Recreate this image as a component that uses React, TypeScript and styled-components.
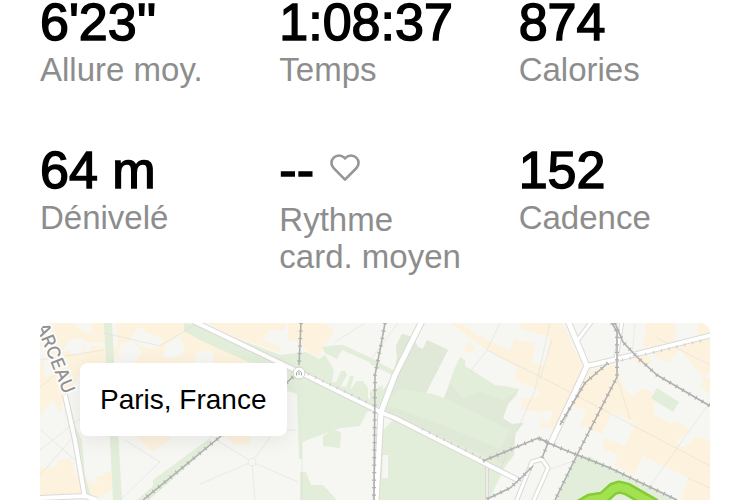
import React from "react";
import styled, { createGlobalStyle } from "styled-components";

const GlobalStyle = createGlobalStyle`
  * { box-sizing: border-box; }
  body { margin: 0; background: #fff; }
`;

const Page = styled.main`
  display: flex;
  flex-direction: column;
  gap: 48px;
  min-height: 100vh;
  padding: 0 40px;
  font-family: "Liberation Sans", Arial, sans-serif;
  color: #000;
`;

const Stats = styled.dl`
  display: grid;
  grid-template-columns: repeat(3, 1fr);
  gap: 60px 48px;
  margin: 0;
`;

const Stat = styled.div`
  display: flex;
  flex-direction: column-reverse;
  justify-content: flex-end;
  gap: 7px;
`;

const Value = styled.dd<{ $withIcon?: boolean }>`
  display: flex;
  align-items: flex-start;
  gap: 16px;
  min-height: ${(p) => (p.$withIcon ? 46 : 44)}px;
  margin: 0;
  font-size: 52px;
  line-height: 44px;
  font-kerning: none;
  white-space: nowrap;
  -webkit-text-stroke: 1.5px #000;
`;

const Label = styled.dt`
  font-size: 33px;
  line-height: 37px;
  color: #8d8d8d;
`;

const HeartIcon = styled.svg`
  width: 30px;
  height: 28px;
  margin-top: 6px;
  fill: none;
  stroke: #969696;
  stroke-width: 2.6;
  stroke-linejoin: round;
`;

const MapCard = styled.section`
  position: relative;
  flex: 1;
  min-height: 177px;
  overflow: hidden;
  border-radius: 10px 10px 0 0;
  background: #f6f7f2;
`;

const MapDrawing = styled.svg`
  position: absolute;
  inset: 0;
  width: 100%;
  height: 100%;
`;

const Place = styled.div`
  position: absolute;
  top: 40px;
  left: 40px;
  padding: 20px;
  border-radius: 8px;
  background: #fff;
  box-shadow: 0 4px 20px rgba(0, 0, 0, 0.07);
  font-size: 28px;
  line-height: 33px;
`;

const stats = [
  { value: "6'23''", label: "Allure moy." },
  { value: "1:08:37", label: "Temps" },
  { value: "874", label: "Calories" },
  { value: "64 m", label: "Dénivelé" },
  { value: "--", label: "Rythme card. moyen", heart: true },
  { value: "152", label: "Cadence" },
];

const blocks = [
  "M50 323H73L83 331 92 334V323H104L105 343 90 343 80 338 70 340 62 352 81 348 100 345 108 352V372L80 376 66 396 60 412 52 400 40 416V365L46 350 40 345V336L52 335Z",
  "M116 323H185L230 344 290 366H120L112 350 118 345Z",
  "M208 323H286L285 330 270 330 262 340 280 347 281 353 225 334Z",
  "M288 323H325L335 331 328 340 318 358 306 350 300 343 288 340Z",
  "M133 434H170V440L153 452ZM203 434H250V444L236 445 225 437Z",
  "M40 468L57 466V461L70 458 74 464V475L85 479 97 484V476H103L105 472H112V490L98 498 60 495 40 498Z",
  "M450 323H461L475 333 490 342 510 350 514 339 534 343 535 352 531 362 545 366 550 336 540 335 521 329 520 323H562L568 333 573 347 582 362 583 375 556 430 547 427 553 412 545 410 541 413V428H547L540 412 521 409 523 399 536 397 540 391 514 379 518 368 498 357 487 350 470 338Z",
  "M469 342L475 349 469 354 464 349Z",
  "M585 372L617 364 620 378 625 390 635 397 641 388 652 392 655 402 653 414 672 424 678 422 690 430 676 442 684 448 695 437 710 440V500H681L688 478 643 456 634 475 614 465 618 455 602 448 605 438 625 446 635 423 612 412 602 434 580 425 587 410 570 405Z",
  "M646 323H676L675 342 697 338 698 323H710V370L700 385 710 395V378L704 378 680 350 668 362 657 358 650 345 643 348Z",
  "M631 356H650L651 364 640 366Z",
];

const gaps = [
  "M137 328H142L145 332 162 338 159 349 143 347 130 339Z",
  "M166 344L180 336 185 351 175 358 163 358Z",
  "M70 348H82V354H71ZM84 344L90 346V352H84Z",
  "M43 352L52 355 55 371 45 377Z",
  "M195 353L212 350 214 363H196Z",
  "M120 345L132 340 142 352 134 363H118Z",
];

const parks = [
  "M104 323H112L122 500H113Z",
  "M184 323L200 325 225 334 280 355 306 352 319 359 325 355 334 370 332 382 336 382 341 371 345 371 347 375 341 386 346 387 350 376 354 376 350 390 357 381 363 381 368 388 368 398 380 408 367 412 360 426 340 428 302 442V459H299L297 394 285 390V370L255 365 200 340 184 331Z",
  "M322 347L335 345 343 345 380 362 378 366 342 350 337 359 325 353Z",
  "M323 436L333 430 341 432 340 448 323 446Z",
  "M300 472H306L311 485H323L337 500H300Z",
  "M396 346L402 334 413 337 418 347 423 349 427 340 448 350 426 393 433 394 444 398 454 370 460 357 465 360V366L478 374 495 385 505 386 519 389 516 396 508 404 503 418 512 424 524 423 515 433 514 455 505 467 489 500H376L383 430 392 421 383 412 380 395 391 378 397 358Z",
  "M370 358L395 371 394 376 370 364ZM370 392L383 385 381 410 370 408Z",
  "M577 455L590 457 677 500H555Z",
  "M657 388L679 402 673 412 651 398Z",
  "M68 397L76 428 82 440 85 475 92 500H85L74 442Z",
  "M137 500L153 486V480L210 438 213 443 149 500Z",
];

const woods = [
  "M396 346L402 334 413 337 418 347 423 349 427 340 448 350 426 393 433 394 400 389 391 398 397 358Z",
  "M444 398L451 383 463 399 480 391 503 401 519 389 508 404 503 418 512 424 524 423 515 433 514 455 504 464 390 414 384 407 395 408 440 424 500 449 510 430 480 415Z",
];

const paths = [
  "M40 387L58 373M40 450L104 400M41 430L75 460M120 500L160 462 125 440M104 333L160 346 198 323",
  "M40 360L104 350M75 435L40 475M252 462L255 500M252 462L200 484M252 462L298 482M252 462L210 436M252 462L275 430H297M302 442L302 500",
  "M335 342L365 323M398 323L372 358M500 323L487 350 470 372M550 323L535 390 500 470M487 350L545 379 710 466",
  "M540 379L552 340M617 377L630 419M710 402L640 500M635 323L632 356M657 338L710 365M688 478L710 488M548 470L577 460",
];

const railways = [
  "M301 323L299 365",
  "M293 377L285 384 210 445 143 500",
  "M385 323L381 345 375 375 374 500",
  "M483 461L500 454 538 438 548 442",
  "M540 439L560 448 610 468 677 500",
  "M487 499L510 488 522 477 533 466M542 458L548 443",
  "M612 323L617 332 617 377 577 455 555 500",
  "M615 323L623 342 637 357 657 375 710 406",
  "M608 363L585 383 570 408 560 425",
];

const roads = [
  { d: "M65 395L75 440 85 498", w: 4 },
  { d: "M40 498L85 496 97 500", w: 4 },
  { d: "M193 321L299 372 380 412 395 418 520 481", w: 4 },
  { d: "M422 321L395 375 381 412 376 502", w: 5 },
  { d: "M568 321L587 366 550 445", w: 5 },
  { d: "M587 366L617 359 712 335", w: 4 },
  { d: "M622 321L616 359", w: 3 },
  { d: "M592 321L577 341", w: 3 },
  { d: "M516 502L532 462 542 459 548 468 533 502", w: 3 },
];

const Heart = () => (
  <HeartIcon viewBox="0 0 30 28" aria-hidden="true">
    <path d="M15 25.6 3.7 14.2a7.4 7.4 0 0 1 0-10.6 7.6 7.6 0 0 1 10.6 0L15 4.4l.7-.8a7.6 7.6 0 0 1 10.6 0 7.4 7.4 0 0 1 0 10.6Z" />
  </HeartIcon>
);

const CityMap = () => (
  <MapDrawing viewBox="40 323 670 177" preserveAspectRatio="xMinYMin slice" aria-hidden="true">
    <path d={blocks.join("")} fill="#fdf2de" />
    <path d={gaps.join("")} fill="#f6f7f2" />
    <path d={parks.join("")} fill="#e2edda" />
    <path d={woods.join("")} fill="#e0e9d7" />
    <path d="M383 455H388V478H382ZM392 418L386 421 383 429 383 415Z" fill="#f6f7f2" />
    <path d={paths.join("")} fill="none" stroke="#dededa" strokeWidth="1" opacity="0.5" />
    <circle cx="252" cy="462" r="4" fill="#f6f7f2" stroke="#e9e9e5" />
    <path d="M487 466V500" stroke="#d8dad3" strokeWidth="4" />
    <path d="M487 466V500" stroke="#ecece9" strokeWidth="2" />
    <g fill="none" strokeLinejoin="round">
      {roads.map((r) => (
        <path key={r.d} d={r.d} stroke="#dadad7" strokeWidth={r.w + 2} />
      ))}
      {roads.map((r) => (
        <path key={r.d} d={r.d} stroke="#fff" strokeWidth={r.w} />
      ))}
    </g>
    <g fill="none" stroke="#b0b0b0">
      <path d={railways.join("")} strokeWidth="1.6" />
      <path d={railways.join("")} strokeWidth="4" strokeDasharray="1.2 6.3" />
      <path
        d="M308 374L375 406M422 429L482 458M622 360L705 340"
        stroke="#cbcbc7"
        strokeWidth="3"
        strokeDasharray="1 7"
      />
    </g>
    <circle cx="299" cy="373" r="6" fill="#fff" stroke="#d0d1cd" />
    <path d="M296.500 375.500V372.500L299 370.500 301.500 372.500V375.500M299 372V375" fill="none" stroke="#aaa" strokeWidth="1" />
    <path
      d="M576 508L590 500 603 498 613 489 619 487 627 489 655 505"
      fill="none"
      stroke="#83cc35"
      strokeWidth="13"
      strokeLinejoin="round"
    />
    <path
      d="M576 508L590 500 603 498 613 489 619 487 627 489 655 505"
      fill="none"
      stroke="#a2e250"
      strokeWidth="8"
      strokeLinejoin="round"
    />
    <text
      transform="translate(36 326) rotate(68)"
      fill="#929292"
      stroke="#fff"
      strokeWidth="3"
      paintOrder="stroke"
      fontFamily="Inter, sans-serif"
      fontSize="18"
      fontWeight="500"
    >
      ARCEAU
    </text>
  </MapDrawing>
);

export default function App() {
  return (
    <>
      <GlobalStyle />
      <Page>
        <Stats>
          {stats.map((s) => (
            <Stat key={s.label}>
              <Label>{s.label}</Label>
              <Value $withIcon={s.heart}>
                {s.value}
                {s.heart && <Heart />}
              </Value>
            </Stat>
          ))}
        </Stats>
        <MapCard aria-label="Carte du parcours">
          <CityMap />
          <Place>Paris, France</Place>
        </MapCard>
      </Page>
    </>
  );
}
